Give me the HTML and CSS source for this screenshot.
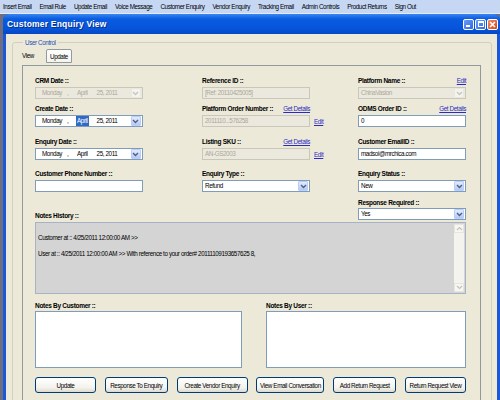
FILE: index.html
```html
<!DOCTYPE html>
<html lang="en">
<head>
<meta charset="UTF-8" />
<title>Customer Enquiry View</title>
<link rel="stylesheet" href="styles.css">
</head>
<body>
<nav class="menubar">
  <span>Insert Email</span>
  <span>Email Rule</span>
  <span>Update Email</span>
  <span>Voice Message</span>
  <span>Customer Enquiry</span>
  <span>Vendor Enquiry</span>
  <span>Tracking Email</span>
  <span>Admin Controls</span>
  <span>Product Returns</span>
  <span>Sign Out</span>
</nav>

<div class="window">
  <div class="titlebar">
    <span class="title">Customer Enquiry View</span>
    <div class="winbtns">
      <span class="wbtn min"><i></i></span>
      <span class="wbtn max"><i></i></span>
      <span class="wbtn close">
        <svg width="9" height="9" viewBox="0 0 9 9"><path d="M2 2 L7 7 M7 2 L2 7" stroke="#fff" stroke-width="1.6"/></svg>
      </span>
    </div>
  </div>

  <div class="window-body">
    <fieldset class="group">
      <legend>User Control</legend>
      <div class="tabs">
        <span class="tab">View</span>
        <span class="tab active">Update</span>
      </div>

      <div class="panel">
        <!-- top fields -->
        <div class="fields">
          <div class="field">
            <div class="lbl"><b>CRM Date ::</b></div>
            <div class="date disabled">
              <span class="d-day">Monday</span><span class="d-sep">,</span><span class="d-mon">April</span><span class="d-rest">25, 2011</span>
              <span class="arrow"><svg width="7" height="5" viewBox="0 0 7 5"><path d="M1 1 L3.5 3.5 L6 1" fill="none" stroke-width="1.4"/></svg></span>
            </div>
          </div>
          <div class="field">
            <div class="lbl"><b>Reference ID ::</b></div>
            <div class="input disabled">[Ref: 20110425005]</div>
          </div>
          <div class="field">
            <div class="lbl"><b>Platform Name ::</b><a>Edit</a></div>
            <div class="select disabled">
              <span class="val">ChinaVasion</span>
              <span class="arrow"><svg width="7" height="5" viewBox="0 0 7 5"><path d="M1 1 L3.5 3.5 L6 1" fill="none" stroke-width="1.4"/></svg></span>
            </div>
          </div>

          <div class="field">
            <div class="lbl"><b>Create Date ::</b></div>
            <div class="date">
              <span class="d-day">Monday</span><span class="d-sep">,</span><span class="d-mon sel">April</span><span class="d-rest">25, 2011</span>
              <span class="arrow"><svg width="7" height="5" viewBox="0 0 7 5"><path d="M1 1 L3.5 3.5 L6 1" fill="none" stroke-width="1.4"/></svg></span>
            </div>
          </div>
          <div class="field">
            <div class="lbl"><b>Platform Order Number ::</b><a>Get Details</a></div>
            <div class="ctl-row">
              <div class="input disabled">2011110...576258</div>
              <a>Edit</a>
            </div>
          </div>
          <div class="field">
            <div class="lbl"><b>ODMS Order ID ::</b><a>Get Details</a></div>
            <div class="input">0</div>
          </div>

          <div class="field">
            <div class="lbl"><b>Enquiry Date ::</b></div>
            <div class="date">
              <span class="d-day">Monday</span><span class="d-sep">,</span><span class="d-mon">April</span><span class="d-rest">25, 2011</span>
              <span class="arrow"><svg width="7" height="5" viewBox="0 0 7 5"><path d="M1 1 L3.5 3.5 L6 1" fill="none" stroke-width="1.4"/></svg></span>
            </div>
          </div>
          <div class="field">
            <div class="lbl"><b>Listing SKU ::</b><a>Get Details</a></div>
            <div class="ctl-row">
              <div class="input disabled">AN-GS2003</div>
              <a>Edit</a>
            </div>
          </div>
          <div class="field">
            <div class="lbl"><b>Customer EmailID ::</b></div>
            <div class="input">madsoi@mrchica.com</div>
          </div>

          <div class="field">
            <div class="lbl"><b>Customer Phone Number ::</b></div>
            <div class="input"></div>
          </div>
          <div class="field">
            <div class="lbl"><b>Enquiry Type ::</b></div>
            <div class="select">
              <span class="val">Refund</span>
              <span class="arrow"><svg width="7" height="5" viewBox="0 0 7 5"><path d="M1 1 L3.5 3.5 L6 1" fill="none" stroke-width="1.4"/></svg></span>
            </div>
          </div>
          <div class="field">
            <div class="lbl"><b>Enquiry Status ::</b></div>
            <div class="select">
              <span class="val">New</span>
              <span class="arrow"><svg width="7" height="5" viewBox="0 0 7 5"><path d="M1 1 L3.5 3.5 L6 1" fill="none" stroke-width="1.4"/></svg></span>
            </div>
          </div>
        </div>

        <div class="history-head">
          <b class="hist-lbl">Notes History ::</b>
          <div class="field">
            <div class="lbl short"><b>Response Required ::</b></div>
            <div class="select">
              <span class="val">Yes</span>
              <span class="arrow"><svg width="7" height="5" viewBox="0 0 7 5"><path d="M1 1 L3.5 3.5 L6 1" fill="none" stroke-width="1.4"/></svg></span>
            </div>
          </div>
        </div>

        <div class="history">
          <div class="history-text">
            <p>Customer at :: 4/25/2011 12:00:00 AM &gt;&gt;</p>
            <p>User at :: 4/25/2011 12:00:00 AM &gt;&gt; With reference to your order# 20111109193657625 8,</p>
          </div>
          <div class="scroll">
            <span class="sb-btn"><svg width="7" height="5" viewBox="0 0 7 5"><path d="M1 4 L3.5 1.5 L6 4" fill="none" stroke="#c3c3bd" stroke-width="1.2"/></svg></span>
            <span class="sb-btn"><svg width="7" height="5" viewBox="0 0 7 5"><path d="M1 1 L3.5 3.5 L6 1" fill="none" stroke="#c3c3bd" stroke-width="1.2"/></svg></span>
          </div>
        </div>

        <div class="notes">
          <div>
            <div class="lbl short"><b>Notes By Customer ::</b></div>
            <div class="textarea"></div>
          </div>
          <div>
            <div class="lbl short"><b>Notes By User ::</b></div>
            <div class="textarea"></div>
          </div>
        </div>

        <div class="buttons">
          <button style="width:61px">Update</button>
          <button style="width:63px">Response To Enquiry</button>
          <button style="width:71px">Create Vendor Enquiry</button>
          <button style="width:68px">View Email Conversation</button>
          <button style="width:63px">Add Return Request</button>
          <button style="width:61px">Return Request View</button>
        </div>
      </div>
    </fieldset>
  </div>
</div>
</body>
</html>
```

FILE: styles.css
```css
* {
  box-sizing: border-box;
}
html, body {
  margin: 0;
}
body {
  width: 500px;
  height: 400px;
  overflow: hidden;
  background: #6e6e80;
  font-family: "Liberation Sans", Arial, sans-serif;
  font-size: 6.3px;
  letter-spacing: -0.4px;
  color: #000;
}

/* top menu */
.menubar {
  height: 14px;
  background: #c6d7f4;
  border-bottom: 1px solid #e4ebf8;
  display: flex;
  align-items: center;
  gap: 8px;
  padding-left: 3px;
}

/* window frame */
.window {
  margin-left: 3px;
  height: 386px;
  background: #1a57d9;
  border-radius: 6px 6px 0 0;
  display: flex;
  flex-direction: column;
}
.titlebar {
  height: 20px;
  flex-shrink: 0;
  display: flex;
  align-items: center;
  padding: 0 2px 0 4px;
  border-radius: 6px 6px 0 0;
  background: linear-gradient(#3a86f0, #0a5be0 25%, #0654d9 75%, #0546c2);
}
.title {
  color: #fff;
  font-weight: bold;
  font-size: 8.5px;
  letter-spacing: 0.2px;
  text-shadow: 1px 1px 0 #0a2f8a;
}
.winbtns {
  margin-left: auto;
  display: flex;
  gap: 1px;
}
.wbtn {
  width: 11px;
  height: 11px;
  border: 1px solid #fff;
  border-radius: 2px;
  background: linear-gradient(135deg, #6a9df7, #2f6ae6);
  display: flex;
  align-items: center;
  justify-content: center;
  position: relative;
}
.wbtn.min i {
  position: absolute;
  left: 2px;
  bottom: 2px;
  width: 4px;
  height: 2px;
  background: #fff;
}
.wbtn.max i {
  width: 6px;
  height: 6px;
  border: 1px solid #fff;
  border-top-width: 2px;
}
.wbtn.close {
  background: linear-gradient(135deg, #f08a5c, #d9461a);
}

.window-body {
  flex: 1;
  margin: 0 3px;
  background: #ece9d8;
  overflow: hidden;
  padding-top: 4px;
}

/* group box */
.group {
  margin: 0 5px 0 6px;
  padding: 0 10px 0 9px;
  border: 1px solid #d0d0bf;
  border-radius: 3px;
  min-width: 0;
}
.group legend {
  color: #2a4fb8;
  padding: 0 2px;
  margin-left: 1px;
  line-height: 9px;
}

/* tabs */
.tabs {
  display: flex;
  align-items: flex-end;
  height: 18px;
  padding-top: 2px;
  padding-bottom: 2px;
}
.tab {
  height: 14px;
  line-height: 14px;
  padding: 0 12px 0 0;
}
.tab.active {
  padding: 0 3px;
  width: 26px;
  text-align: center;
  border: 1px solid #919b9c;
  border-radius: 2px 2px 0 0;
  background: linear-gradient(#fefefe, #f4f3ee);
}

.panel {
  border: 1px solid #919b9c;
  border-bottom: none;
  height: 340px;
  padding: 10px 14px 0 12px;
}

/* field grid */
.fields {
  display: grid;
  grid-template-columns: 167px 156px 108px;
  grid-template-rows: 28px 33px 32px 29px;
}
.lbl {
  display: flex;
  justify-content: space-between;
  width: 108px;
  height: 11px;
  line-height: 9px;
}
.lbl.short {
  height: 10px;
}
.lbl b, .hist-lbl {
  font-size: 6.5px;
  letter-spacing: -0.3px;
}
a {
  color: #2b2bc4;
  text-decoration: underline;
  line-height: 9px;
}
.ctl-row {
  display: flex;
  align-items: center;
  gap: 4px;
}

.input, .select, .date {
  width: 108px;
  height: 12px;
  border: 1px solid #7f9db9;
  background: #fff;
  line-height: 10px;
  padding: 0 2px;
  white-space: nowrap;
  overflow: hidden;
}
.select, .date {
  display: flex;
  align-items: center;
  padding-right: 1px;
}
.select .val {
  flex: 1;
}
.date span {
  display: inline-block;
}
.d-day { margin-left: 4px; width: 25px; }
.d-sep { width: 9px; }
.d-mon { padding: 0 1px; margin-right: 8px; }
.d-mon.sel {
  background: #316ac5;
  color: #fff;
}
.d-rest { flex: 1; }

.arrow {
  width: 10px;
  height: 10px;
  border: 1px solid #b9cdf9;
  border-radius: 1px;
  background: linear-gradient(#e3ebfd, #b6caf7);
  display: flex;
  align-items: center;
  justify-content: center;
}
.arrow path {
  stroke: #4d6185;
}
.disabled {
  background: #ebe9dd;
  border-color: #c9c7ba;
  color: #aca899;
}
.disabled .arrow {
  border-color: #e8e7e0;
  background: #f4f3ee;
}
.disabled .arrow path {
  stroke: #c9c7ba;
}

/* notes history */
.history-head {
  display: flex;
  justify-content: space-between;
  align-items: flex-end;
  margin-bottom: 2px;
}
.hist-lbl {
  line-height: 9px;
}
.history {
  height: 72px;
  border: 1px solid #a7b3c4;
  background: #d4d4d4;
  display: flex;
}
.history-text {
  flex: 1;
  padding: 7px 2px;
}
.history-text p {
  margin: 0;
  line-height: 16px;
}
.scroll {
  width: 10px;
  margin: 1px 1px 1px 0;
  background: #f4f3ee;
  display: flex;
  flex-direction: column;
  justify-content: space-between;
}
.sb-btn {
  height: 9px;
  display: flex;
  align-items: center;
  justify-content: center;
  background: #f7f6f2;
  border: 1px solid #e6e5de;
}

/* notes textareas */
.notes {
  display: grid;
  grid-template-columns: 207px 200px;
  column-gap: 24px;
  margin-top: 7px;
}
.textarea {
  height: 57px;
  border: 1px solid #7f9db9;
  background: #fff;
}

/* buttons */
.buttons {
  display: flex;
  justify-content: space-between;
  margin-top: 9px;
}
.buttons button {
  height: 16px;
  padding: 0;
  font-family: inherit;
  font-size: 6.3px;
  letter-spacing: -0.4px;
  border: 1px solid #003c74;
  border-radius: 3px;
  background: linear-gradient(#ffffff, #f3f2ec 70%, #dcdad0);
  color: #000;
}
```
